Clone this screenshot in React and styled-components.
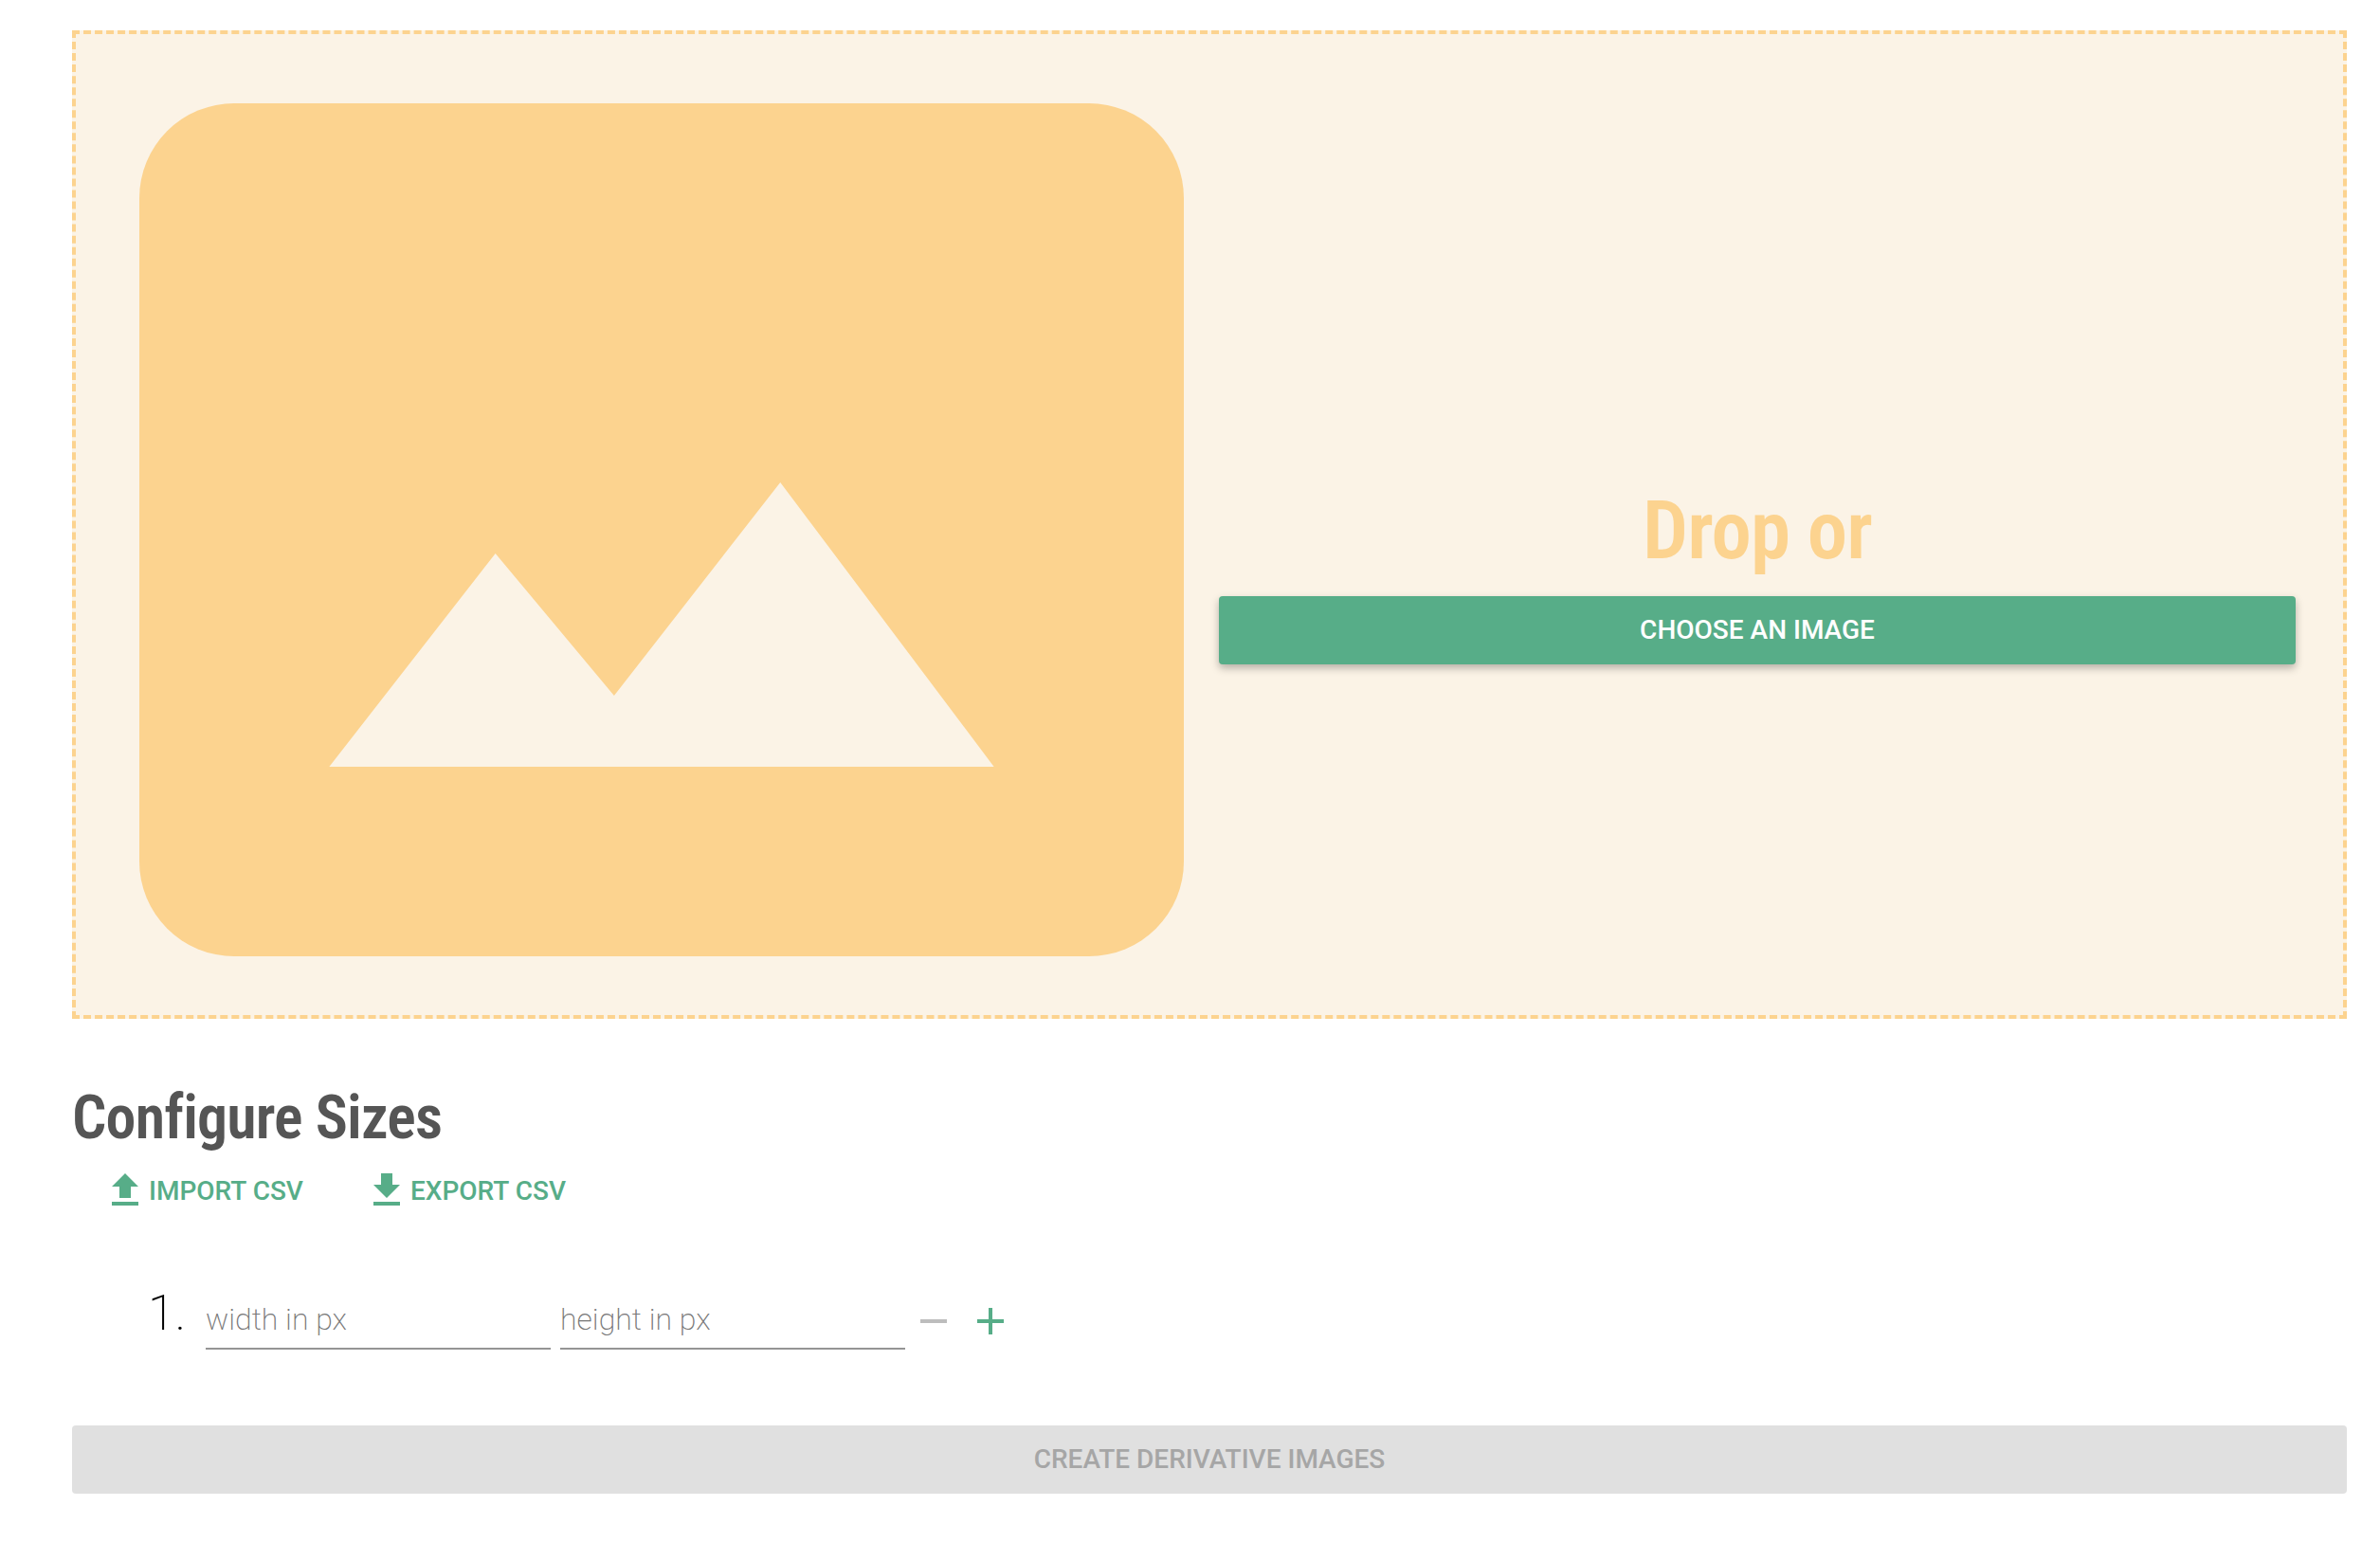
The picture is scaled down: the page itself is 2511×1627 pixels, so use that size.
import React from 'react';
import styled, { createGlobalStyle } from 'styled-components';

const GREEN = '#57ad88';
const AMBER = '#fcd38f';
const CREAM = '#fbf3e6';

const Global = createGlobalStyle`
  html, body {
    margin: 0;
    padding: 0;
    background: #fff;
    font-family: Roboto, "Liberation Sans", sans-serif;
  }
`;

const Page = styled.main`
  width: 2400px;
  padding: 32px 35px 51px 76px;
`;

const DropZone = styled.section`
  box-sizing: border-box;
  height: 1043px;
  border: 4px dashed ${AMBER};
  background: ${CREAM};
  padding: 73px 50px 62px 67px;
  display: flex;
  gap: 37px;
`;

const Placeholder = styled.svg`
  display: block;
  flex: none;
  width: 1102px;
  height: 900px;
`;

const DropColumn = styled.div`
  flex: 1;
  display: flex;
  flex-direction: column;
  align-items: stretch;
  padding-top: 401px;
`;

const DropTitle = styled.h2`
  margin: 0 0 19px;
  height: 100px;
  line-height: 100px;
  text-align: center;
  font-size: 85px;
  font-weight: 600;
  font-stretch: 75%;
  letter-spacing: -0.9px;
  color: ${AMBER};
`;

const Button = styled.button`
  display: block;
  width: 100%;
  height: 72px;
  border: 0;
  border-radius: 4px;
  padding: 0 0 2px;
  font-family: inherit;
  font-size: 28px;
  font-weight: 500;
  text-transform: uppercase;
  color: ${p => (p.disabled ? '#a6a6a6' : '#fff')};
  background: ${p => (p.disabled ? '#e0e0e0' : GREEN)};
  box-shadow: ${p => (p.disabled ? 'none' : '0 4px 8px rgba(0,0,0,.28)')};
`;

const SectionTitle = styled.h2`
  margin: 55px 0 0;
  height: 100px;
  line-height: 100px;
  font-size: 64px;
  font-weight: 600;
  font-stretch: 75%;
  letter-spacing: -0.85px;
  color: #555;
`;

const CsvBar = styled.div`
  display: flex;
  align-items: center;
  gap: 64px;
  padding-left: 32px;
  margin-top: 2px;
`;

const CsvLink = styled.a`
  display: flex;
  align-items: center;
  gap: 1px;
  font-size: 28px;
  font-weight: 500;
  color: ${GREEN};
  text-transform: uppercase;
`;

const Glyph = styled.svg`
  display: block;
  flex: none;
  width: 48px;
  height: 48px;
  fill: ${p => p.$tone || GREEN};
`;

const SizeRow = styled.div`
  display: flex;
  align-items: flex-end;
  height: 72px;
  margin: 72px 0 80px;
  padding-left: 80px;
`;

const RowIndex = styled.span`
  width: 61px;
  font-size: 52px;
  font-weight: 200;
  line-height: 68px;
  color: #000;
  align-self: flex-start;
`;

const SizeInput = styled.input`
  box-sizing: border-box;
  width: 364px;
  height: 62px;
  margin-right: 10px;
  border: 0;
  border-bottom: 2px solid #949494;
  outline: none;
  padding: 0;
  background: transparent;
  font-family: inherit;
  font-size: 32px;
  font-weight: 200;

  &::placeholder {
    color: #777;
    opacity: 1;
  }
`;

const RowActions = styled.div`
  display: flex;
  gap: 12px;
  align-self: flex-end;
  margin: 0 0 6px -4px;
`;

const Upload = 'M9 16h6v-6h4l-7-7-7 7h4zm-4 2h14v2H5z';
const Download = 'M19 9h-4V3H9v6H5l7 7 7-7zM5 18v2h14v-2H5z';
const Remove = 'M19 13H5v-2h14v2z';
const Add = 'M19 13h-6v6h-2v-6H5v-2h6V5h2v6h6v2z';

export default function App() {
  return (
    <Page>
      <Global />
      <DropZone>
        <Placeholder viewBox="0 0 1100 900" preserveAspectRatio="none">
          <path
            fill={AMBER}
            d="M100 0H1000A100 100 0 0 1 1100 100V800A100 100 0 0 1 1000 900H100A100 100 0 0 1 0 800V100A100 100 0 0 1 100 0Z"
          />
          <path fill={CREAM} d="M200 700L375 475L500 625L675 400L900 700Z" />
        </Placeholder>
        <DropColumn>
          <DropTitle>Drop or</DropTitle>
          <Button>Choose an image</Button>
        </DropColumn>
      </DropZone>

      <SectionTitle>Configure Sizes</SectionTitle>
      <CsvBar>
        <CsvLink>
          <Glyph viewBox="0 0 24 24"><path d={Upload} /></Glyph>
          Import CSV
        </CsvLink>
        <CsvLink>
          <Glyph viewBox="0 0 24 24"><path d={Download} /></Glyph>
          Export CSV
        </CsvLink>
      </CsvBar>

      <SizeRow>
        <RowIndex>1.</RowIndex>
        <SizeInput placeholder="width in px" />
        <SizeInput placeholder="height in px" />
        <RowActions>
          <Glyph $tone="#bdbdbd" viewBox="0 0 24 24"><path d={Remove} /></Glyph>
          <Glyph viewBox="0 0 24 24"><path d={Add} /></Glyph>
        </RowActions>
      </SizeRow>

      <Button disabled>Create derivative images</Button>
    </Page>
  );
}
